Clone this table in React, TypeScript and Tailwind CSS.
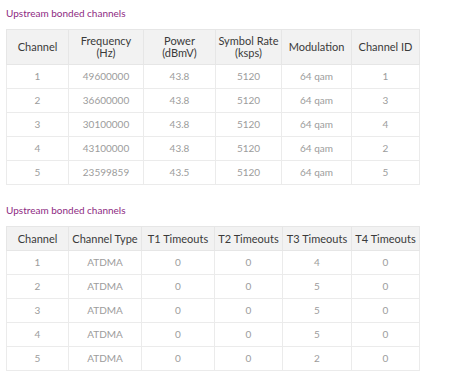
const upstream = [
  ["1", "49600000", "43.8", "5120", "64 qam", "1"],
  ["2", "36600000", "43.8", "5120", "64 qam", "3"],
  ["3", "30100000", "43.8", "5120", "64 qam", "4"],
  ["4", "43100000", "43.8", "5120", "64 qam", "2"],
  ["5", "23599859", "43.5", "5120", "64 qam", "5"],
];

const timeouts = [
  ["1", "ATDMA", "0", "0", "4", "0"],
  ["2", "ATDMA", "0", "0", "5", "0"],
  ["3", "ATDMA", "0", "0", "5", "0"],
  ["4", "ATDMA", "0", "0", "5", "0"],
  ["5", "ATDMA", "0", "0", "2", "0"],
];

function DataTable({
  head,
  widths,
  rows,
  headHeight,
}: {
  head: React.ReactNode[];
  widths: string[];
  rows: string[][];
  headHeight: string;
}) {
  return (
    <table className="table-fixed border-collapse border border-[#e6e6e6] w-[413px]">
      <colgroup>
        {widths.map((w, i) => (
          <col key={i} className={w} />
        ))}
      </colgroup>
      <thead>
        <tr className={`bg-[#f2f2f2] ${headHeight}`}>
          {head.map((h, i) => (
            <th
              key={i}
              className="border border-[#e6e6e6] p-0 font-normal text-[11px] leading-[12px] text-[#3a3a3a] text-center align-middle"
            >
              {h}
            </th>
          ))}
        </tr>
      </thead>
      <tbody>
        {rows.map((r, i) => (
          <tr key={i} className="h-[24px] bg-white">
            {r.map((c, j) => (
              <td
                key={j}
                className="border border-[#ebebeb] p-0 text-[10px] text-[#9c9c9c] text-center align-middle"
              >
                {c}
              </td>
            ))}
          </tr>
        ))}
      </tbody>
    </table>
  );
}

export default function App() {
  return (
    <div className="w-[450px] h-[387px] bg-white pl-[6px] pt-[6px] font-['Lato','Liberation_Sans',sans-serif]">
      <h2 className="text-[10px] leading-[14px] text-[#8e2a82] mb-[9px]">Upstream bonded channels</h2>
      <DataTable
        headHeight="h-[35px]"
        widths={["w-[62px]", "w-[75px]", "w-[72px]", "w-[66px]", "w-[70px]", "w-[68px]"]}
        head={[
          "Channel",
          <>Frequency<br />(Hz)</>,
          <>Power<br />(dBmV)</>,
          <>Symbol Rate<br />(ksps)</>,
          "Modulation",
          "Channel ID",
        ]}
        rows={upstream}
      />
      <h2 className="text-[10px] leading-[14px] text-[#8e2a82] mt-[18px] mb-[9px]">Upstream bonded channels</h2>
      <DataTable
        headHeight="h-[24px]"
        widths={["w-[62px]", "w-[73px]", "w-[73px]", "w-[68px]", "w-[69px]", "w-[68px]"]}
        head={["Channel", "Channel Type", "T1 Timeouts", "T2 Timeouts", "T3 Timeouts", "T4 Timeouts"]}
        rows={timeouts}
      />
    </div>
  );
}
